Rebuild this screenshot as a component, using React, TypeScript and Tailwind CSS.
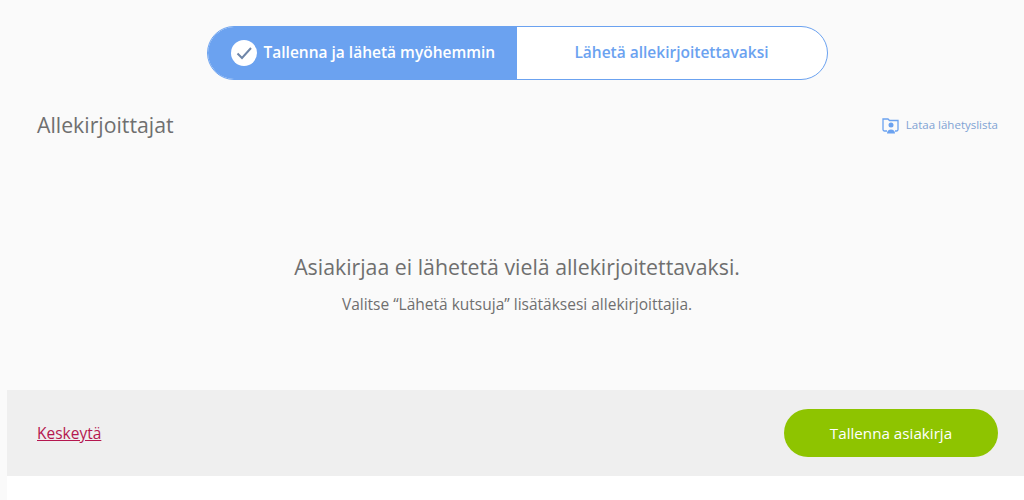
export default function App() {
  return (
    <div className="h-[500px] w-[1024px] overflow-hidden bg-[#fafafa] font-['Open_Sans',sans-serif]">
      <div className="ml-[7px] flex h-[500px] flex-col">
        {/* Send mode toggle */}
        <div className="flex justify-center pt-[26px] pl-[3px]">
          <div className="flex h-[54px] w-[621px] overflow-hidden rounded-full border border-[#6ba2f0] bg-white">
            <div className="flex w-[309px] items-center gap-[7px] bg-[#6ba2f0] pl-[23px] text-[15.5px] font-semibold text-white">
              <span className="flex h-[26px] w-[26px] items-center justify-center rounded-full bg-white">
                <svg width="18" height="16" viewBox="0 0 18 16" fill="none">
                  <path d="M2.5 8.5l4.5 4.5L16 3" stroke="#6f86a8" strokeWidth="2" />
                </svg>
              </span>
              Tallenna ja lähetä myöhemmin
            </div>
            <div className="flex flex-1 items-center justify-center text-[15.5px] font-semibold text-[#6ba2f0]">
              Lähetä allekirjoitettavaksi
            </div>
          </div>
        </div>

        <div className="flex items-center justify-between pt-[31px] pr-[26px] pl-[30px]">
          <h2 className="text-[21.25px] leading-[28px] text-[#6f6f6f]">Allekirjoittajat</h2>
          <a className="flex items-center gap-[7px] text-[11.5px] text-[#7fa3d4]">
            <svg width="17" height="17" viewBox="0 0 17 17" fill="none">
              <path d="M5 14H2.5A1.5 1.5 0 0 1 1 12.500V2h5l1.500 1.500H16v9a1.500 1.500 0 0 1-1.500 1.500H13" stroke="#6ba2f0" strokeWidth="1.300" />
              <circle cx="9" cy="8" r="2.500" fill="#6ba2f0" />
              <path d="M5 16.500c0-2.500 1.800-4 4-4s4 1.500 4 4z" fill="#6ba2f0" />
            </svg>
            Lataa lähetyslista
          </a>
        </div>

        <div className="flex flex-1 flex-col items-center pt-[114px] pl-[3px]">
          <p className="text-[21.3px] leading-[28px] text-[#6f6f6f]">Asiakirjaa ei lähetetä vielä allekirjoitettavaksi.</p>
          <p className="mt-[13px] text-[15.5px] leading-[20px] text-[#6f6f6f]">Valitse “Lähetä kutsuja” lisätäksesi allekirjoittajia.</p>
        </div>

        <div className="flex h-[86px] items-center justify-between bg-[#efefef] pr-[26px] pl-[30px]">
          <a className="pt-[2px] text-[15.5px] text-[#b5174f] underline">Keskeytä</a>
          <button className="h-[48px] w-[214px] rounded-full bg-[#8ec400] text-[15.2px] text-white">Tallenna asiakirja</button>
        </div>
        <div className="h-[24px] bg-white" />
      </div>
    </div>
  );
}
